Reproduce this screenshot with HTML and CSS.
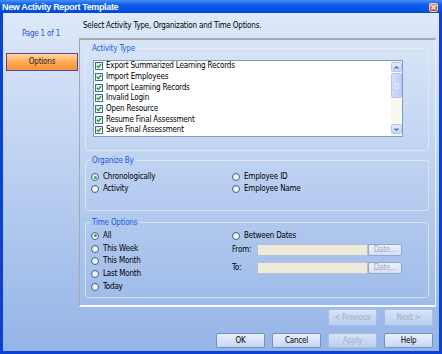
FILE: index.html
```html
<!DOCTYPE html>
<html lang="en">
<head>
	<meta charset="UTF-8">
	<title>New Activity Report Template</title>
	<link rel="stylesheet" href="styles.css">
</head>
<body>
<div class="win">
	<div class="titlebar">
		<span class="title">New Activity Report Template</span>
		<span class="close"><svg width="7" height="7" viewBox="0 0 7 7"><path d="M1.5 1.5 L5.5 5.5 M5.5 1.5 L1.5 5.5" stroke="#fff" stroke-width="1.4"/></svg></span>
	</div>
	<div class="frame">
		<div class="side">
			<p class="page-no">Page 1 of 1</p>
			<button class="step">Options</button>
		</div>
		<div class="main">
			<p class="intro">Select Activity Type, Organization and Time Options.</p>
			<div class="panel">
				<!-- activity type -->
				<fieldset class="grp grp-type">
					<legend>Activity Type</legend>
					<div class="grp-body">
						<div class="listbox">
							<ul class="items">
								<li><span class="chk"><svg width="6" height="6" viewBox="0 0 6 6"><path d="M0.8 2.8 L2.4 4.4 L5.2 1.2" fill="none" stroke="#21a121" stroke-width="1.4"/></svg></span>Export Summarized Learning Records</li>
								<li><span class="chk"><svg width="6" height="6" viewBox="0 0 6 6"><path d="M0.8 2.8 L2.4 4.4 L5.2 1.2" fill="none" stroke="#21a121" stroke-width="1.4"/></svg></span>Import Employees</li>
								<li><span class="chk"><svg width="6" height="6" viewBox="0 0 6 6"><path d="M0.8 2.8 L2.4 4.4 L5.2 1.2" fill="none" stroke="#21a121" stroke-width="1.4"/></svg></span>Import Learning Records</li>
								<li><span class="chk"><svg width="6" height="6" viewBox="0 0 6 6"><path d="M0.8 2.8 L2.4 4.4 L5.2 1.2" fill="none" stroke="#21a121" stroke-width="1.4"/></svg></span>Invalid Login</li>
								<li><span class="chk"><svg width="6" height="6" viewBox="0 0 6 6"><path d="M0.8 2.8 L2.4 4.4 L5.2 1.2" fill="none" stroke="#21a121" stroke-width="1.4"/></svg></span>Open Resource</li>
								<li><span class="chk"><svg width="6" height="6" viewBox="0 0 6 6"><path d="M0.8 2.8 L2.4 4.4 L5.2 1.2" fill="none" stroke="#21a121" stroke-width="1.4"/></svg></span>Resume Final Assessment</li>
								<li><span class="chk"><svg width="6" height="6" viewBox="0 0 6 6"><path d="M0.8 2.8 L2.4 4.4 L5.2 1.2" fill="none" stroke="#21a121" stroke-width="1.4"/></svg></span>Save Final Assessment</li>
							</ul>
							<div class="vscroll">
								<span class="sb-btn"><svg width="5" height="3" viewBox="0 0 5 3"><path d="M0.5 2.5 L2.5 0.7 L4.5 2.5" fill="none" stroke="#4d6185" stroke-width="1.1"/></svg></span>
								<span class="sb-thumb"><i></i></span>
								<span class="sb-track"></span>
								<span class="sb-btn"><svg width="5" height="3" viewBox="0 0 5 3"><path d="M0.5 0.5 L2.5 2.3 L4.5 0.5" fill="none" stroke="#4d6185" stroke-width="1.1"/></svg></span>
							</div>
						</div>
					</div>
				</fieldset>

				<!-- organize by -->
				<fieldset class="grp grp-org">
					<legend>Organize By</legend>
					<div class="grp-body cols">
						<div>
							<div class="opt"><span class="radio on"></span>Chronologically</div>
							<div class="opt"><span class="radio"></span>Activity</div>
						</div>
						<div>
							<div class="opt"><span class="radio"></span>Employee ID</div>
							<div class="opt"><span class="radio"></span>Employee Name</div>
						</div>
					</div>
				</fieldset>

				<!-- time options -->
				<fieldset class="grp grp-time">
					<legend>Time Options</legend>
					<div class="grp-body cols">
						<div>
							<div class="opt"><span class="radio on"></span>All</div>
							<div class="opt"><span class="radio"></span>This Week</div>
							<div class="opt"><span class="radio"></span>This Month</div>
							<div class="opt"><span class="radio"></span>Last Month</div>
							<div class="opt"><span class="radio"></span>Today</div>
						</div>
						<div>
							<div class="opt"><span class="radio"></span>Between Dates</div>
							<div class="dates">
								<span>From:</span><span class="field"></span><button class="date-btn" disabled>Date...</button>
								<span>To:</span><span class="field"></span><button class="date-btn" disabled>Date...</button>
							</div>
						</div>
					</div>
				</fieldset>
			</div>
			<div class="nav-row">
				<button class="btn" disabled>&lt; Previous</button>
				<button class="btn" disabled>Next &gt;</button>
			</div>
			<div class="btn-row">
				<button class="btn">OK</button>
				<button class="btn">Cancel</button>
				<button class="btn" disabled>Apply</button>
				<button class="btn">Help</button>
			</div>
		</div>
	</div>
</div>
</body>
</html>
```

FILE: styles.css
```css
*{
	box-sizing: border-box;
}
body{
	margin: 0;
	font: 8px/10px "DejaVu Sans Condensed", "Liberation Sans", Arial, sans-serif;
	letter-spacing: -0.2px;
	color: #000;
}
p{
	margin: 0;
}
ul{
	margin: 0;
	padding: 0;
	list-style: none;
}
button{
	font: inherit;
	letter-spacing: inherit;
	margin: 0;
	padding: 0;
	color: #000;
}

.win{
	width: 442px;
	height: 354px;
	display: flex;
	flex-direction: column;
	background-color: #0c42d4;
}
.titlebar{
	height: 13px;
	display: flex;
	justify-content: space-between;
	padding: 0 4px 0 2px;
	background: linear-gradient(#4a90f6, #0d60ea 35%, #0556e4 70%, #0346d2);
}
.title{
	color: white;
	font: bold 9px/12px "Liberation Sans", Arial, sans-serif;
	letter-spacing: -0.35px;
	padding-top: 1px;
}
.close{
	width: 9px;
	height: 9px;
	margin-top: 3px;
	display: flex;
	align-items: center;
	justify-content: center;
	border: 1px solid #f6d0c4;
	border-radius: 2px;
	background: linear-gradient(#f29a7c, #e0512c 60%, #c9401e);
}

.frame{
	flex: 1;
	display: flex;
	margin: 0 3px 3px;
	background: linear-gradient(#dee9f9, #95b4e7);
}
.side{
	width: 76px;
	padding-top: 15.5px;
}
.page-no{
	text-align: center;
	color: #2457d0;
}
.step{
	display: block;
	width: 72px;
	height: 18px;
	margin: 14.5px 0 0 3px;
	color: #222;
	border: 1px solid #55449a;
	background: linear-gradient(#ffd6a6, #ffae5c 45%, #fb9a3e 80%, #f39844);
}

.main{
	flex: 1;
	padding: 7.5px 3px 0 0;
}
.intro{
	padding-left: 4px;
}
.panel{
	height: 269px;
	margin-top: 7.5px;
	padding: 2px 0 0 5px;
	border-top: 2px solid #a4a8b2;
	border-left: 1px solid #a4a8b2;
	border-right: 1px solid #eef3fb;
	border-bottom: 2px solid #f4f7fc;
}

.grp{
	width: 344px;
	min-width: 0;
	margin: 0;
	padding: 0;
	border: 1px solid rgba(236,238,236,0.7);
	border-radius: 3px;
}
.grp legend{
	margin-left: 4px;
	padding: 2px 2px 0;
	color: #1d5be0;
	line-height: 10px;
}
.grp-org{
	margin-top: 3px;
}
.grp-time{
	margin-top: 5px;
}
.grp-type .grp-body{
	padding: 6px 0 13px 7px;
}
.grp-org .grp-body{
	padding: 5px 0 15px 5px;
}
.grp-time .grp-body{
	padding: 1.67px 0 4px 5px;
}
.cols{
	display: grid;
	grid-template-columns: 141px 1fr;
}

.listbox{
	display: flex;
	width: 310px;
	height: 77px;
	border: 1px solid #7f9db9;
	background-color: white;
}
.items{
	flex: 1;
}
.items li{
	display: flex;
	align-items: center;
	height: 10.67px;
	white-space: nowrap;
}
.chk{
	width: 8px;
	height: 8px;
	margin: 0 3px 0 1px;
	display: flex;
	align-items: center;
	justify-content: center;
	border: 1px solid #3a6aa3;
	background: linear-gradient(135deg, #dfe3e8, #fff);
}
.vscroll{
	width: 11px;
	display: flex;
	flex-direction: column;
	padding: 1px 0 2px;
	background-color: #f8f7f0;
}
.sb-btn{
	height: 10px;
	display: flex;
	align-items: center;
	justify-content: center;
	border: 1px solid #b3c7f3;
	border-radius: 2px;
	background: linear-gradient(#e4ecfe, #c3d4fb);
}
.sb-thumb{
	height: 25px;
	margin-top: 1px;
	display: flex;
	align-items: center;
	justify-content: center;
	border: 1px solid #b3c7f3;
	border-radius: 2px;
	background: linear-gradient(90deg, #d3defd, #bccdfa);
}
.sb-thumb i{
	width: 4px;
	height: 6px;
	border: 1px solid #e6eefe;
}
.sb-track{
	flex: 1;
}

.opt{
	display: flex;
	align-items: center;
	height: 12px;
	white-space: nowrap;
}
.grp-time .opt{
	height: 12.67px;
}
.radio{
	width: 8px;
	height: 8px;
	margin-right: 4px;
	display: flex;
	align-items: center;
	justify-content: center;
	border: 1px solid #3d6790;
	border-radius: 50%;
	background: radial-gradient(circle at 65% 65%, #fff, #dcdfe4);
}
.radio.on::after{
	content: "";
	width: 3px;
	height: 3px;
	border-radius: 50%;
	background-color: #2bb02b;
}

.dates{
	display: grid;
	grid-template-columns: 25px 111px 34px;
	grid-auto-rows: 12px;
	row-gap: 6px;
	align-items: center;
	margin-top: 1.67px;
}
.field{
	height: 12px;
	border: 1px solid #b2c2db;
	background-color: #efebdb;
}
.date-btn{
	height: 12px;
	border: 1px solid #8ea7d3;
	border-radius: 2px;
	background: linear-gradient(#eef2fb, #d6e0f4);
	color: #a2aabd;
}

.nav-row,
.btn-row{
	display: flex;
	justify-content: flex-end;
	gap: 7px;
	padding-right: 3px;
}
.nav-row{
	height: 17px;
	margin-top: 2px;
}
.btn-row{
	height: 15px;
	margin-top: 7px;
}
.btn{
	width: 49px;
	border: 1px solid #7590c4;
	border-radius: 2px;
	background: linear-gradient(#e9f0fc, #c5d6f2);
}
.btn:disabled{
	color: #a4afc6;
	border-color: #a8bde2;
	background: linear-gradient(#d8e4f7, #bacfef);
}
```
